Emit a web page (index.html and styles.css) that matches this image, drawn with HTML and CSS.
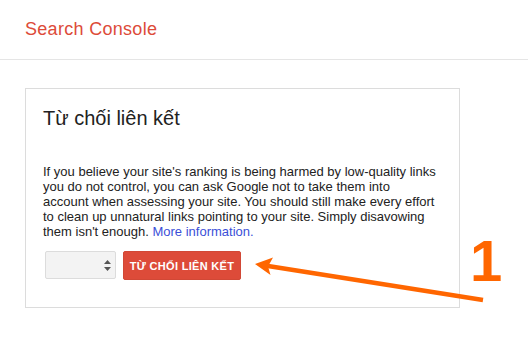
FILE: index.html
```html
<!DOCTYPE html>
<html lang="vi">
<head>
<meta charset="utf-8">
<title>Search Console</title>
<link rel="stylesheet" href="styles.css">
</head>
<body>
<header class="topbar">
  <span class="brand">Search Console</span>
</header>
<main class="main">
  <section class="card">
    <h1 class="card-title">Từ chối liên kết</h1>
    <p class="card-text">If you believe your site's ranking is being harmed by low-quality links you do not control, you can ask Google not to take them into account when assessing your site. You should still make every effort to clean up unnatural links pointing to your site. Simply disavowing them isn't enough. <a class="link" href="#">More information.</a></p>
    <div class="actions">
      <div class="select">
        <svg class="spin" width="7" height="11" viewBox="0 0 7 11"><path d="M3.5 0 L7 4 L0 4 Z M0 7 L7 7 L3.5 11 Z" fill="#555"/></svg>
      </div>
      <button class="btn">TỪ CHỐI LIÊN KẾT</button>
    </div>
  </section>
</main>
<svg class="annot" width="528" height="340" viewBox="0 0 528 340">
  <line x1="483" y1="300" x2="268" y2="266" stroke="#ff6600" stroke-width="4.5"/>
  <polygon points="255,264 273,257.5 268,266.5 270.5,275" fill="#ff6600"/>
</svg>
<span class="step">1</span>
</body>
</html>
```
FILE: styles.css
```css
html, body {
  margin: 0;
  padding: 0;
  background: #fff;
  font-family: Arial, "Liberation Sans", sans-serif;
  color: #222;
}
.topbar {
  height: 59px;
  border-bottom: 1px solid #e5e5e5;
  display: flex;
  align-items: center;
  padding-left: 25px;
}
.brand {
  font-size: 18px;
  color: #dd4b39;
  line-height: 22px;
  margin-top: -1px;
  letter-spacing: 0.3px;
}
.main {
  padding: 28px 25px;
}
.card {
  border: 1px solid #dcdcdc;
  padding: 17px 17px 27px 17px;
  box-sizing: border-box;
  width: 435px;
}
.card-title {
  margin: 0;
  font-size: 20px;
  line-height: 24px;
  font-weight: normal;
  color: #222;
}
.card-text {
  margin: 34px 0 12px 0;
  font-size: 13px;
  line-height: 15px;
  width: 395px;
}
.link {
  color: #3b4fd8;
  text-decoration: none;
}
.actions {
  display: flex;
  align-items: flex-start;
  gap: 7px;
  padding-left: 2px;
}
.select {
  width: 71px;
  height: 28px;
  box-sizing: border-box;
  border: 1px solid #dcdcdc;
  border-radius: 2px;
  background: #f3f3f3;
  display: flex;
  align-items: center;
  justify-content: flex-end;
  padding-right: 4px;
}
.btn {
  width: 118px;
  height: 29px;
  box-sizing: border-box;
  border: 1px solid #d14836;
  border-radius: 2px;
  background: #dd4b39;
  color: #fff;
  font-family: Arial, "Liberation Sans", sans-serif;
  font-weight: bold;
  font-size: 11px;
  padding: 0;
  letter-spacing: 0.3px;
}
.annot {
  position: absolute;
  left: 0;
  top: 0;
  pointer-events: none;
}
.step {
  position: absolute;
  left: 470px;
  top: 229px;
  font-family: "Liberation Sans", Arial, sans-serif;
  font-weight: bold;
  font-size: 58px;
  line-height: 64px;
  color: #ff6600;
}
```
